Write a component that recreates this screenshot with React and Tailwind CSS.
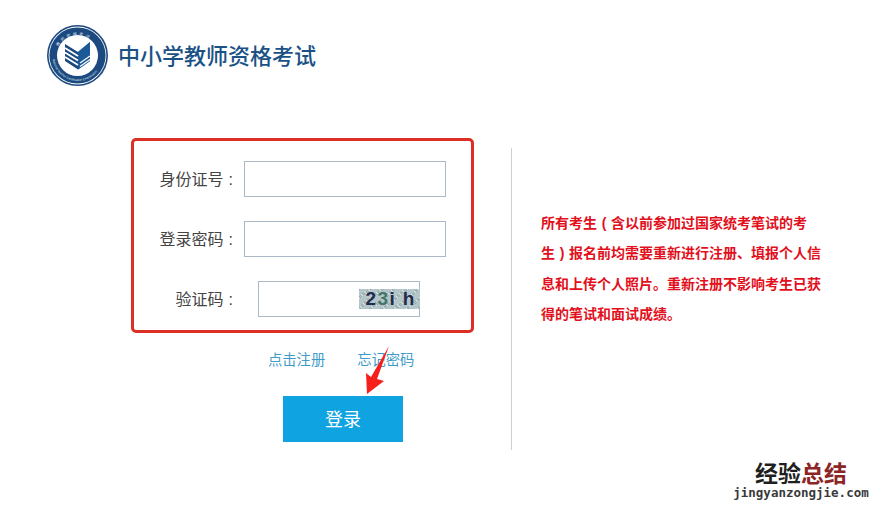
import React from 'react';

const cjk = { sans: 'font-["Liberation_Sans","Noto_Sans_CJK_SC",sans-serif]' };

// pseudo noise for the captcha background
const noise = Array.from({ length: 240 }, (_, i) => {
  const a = (i * 7919) % 61;
  const b = (i * 104729) % 20;
  const c = (i * 31) % 3;
  return { x: a, y: b, fill: ['#8ea6ad', '#dbe5e6', '#9db3a9'][c] };
});

const Logo = () => (
  <svg viewBox="0 0 61 61" className="w-[61px] h-[61px] shrink-0">
    <defs>
      <path id="ringTop" d="M8 33 A22.5 22.5 0 0 1 53 33" />
      <path id="ringBottom" d="M5.5 31 A25 25 0 0 0 55.5 31" />
    </defs>
    <circle cx="30.5" cy="30.5" r="30.5" fill="#1c4a80" />
    <circle cx="30.5" cy="30.5" r="28.9" fill="#ffffff" />
    <circle cx="30.5" cy="30.5" r="28.1" fill="#1c4a80" />
    <circle cx="30.5" cy="30.5" r="20.5" fill="#ffffff" />
    <text fontSize="4" fill="#dfe7f0" letterSpacing="2.2" fontFamily="Noto Sans CJK SC, sans-serif">
      <textPath href="#ringTop" startOffset="17%">教师资格考试</textPath>
    </text>
    <text fontSize="3.1" fill="#dfe7f0" fontFamily="Liberation Sans, sans-serif">
      <textPath href="#ringBottom" startOffset="4%">National Teacher Certification Examination</textPath>
    </text>
    <path d="M18 19 L31 27 L43 17 V36 L31 44.500 L18 36 Z" fill="#1c4a80" />
    <path d="M31 27 L43 17 V36 L31 44.500 Z" fill="#1b5a97" />
    <path d="M18 23 L31 31 M18 27.500 L31 35.500 M18 32 L31 40" stroke="#ffffff" strokeWidth="1.700" fill="none" />
    <path d="M33 38 L43 31 M33 41.500 L43 34.500" stroke="#ffffff" strokeWidth="1.200" fill="none" />
  </svg>
);

const Captcha = () => (
  <div className="relative w-[61px] h-5 -mr-px overflow-hidden bg-[#b4c6ca]">
    <svg className="absolute inset-0 w-[61px] h-5" viewBox="0 0 61 20">
      {noise.map((n, i) => (
        <rect key={i} x={n.x} y={n.y} width="1" height="1" fill={n.fill} />
      ))}
    </svg>
    <span className='absolute left-[6.500px] top-0 text-[19px] leading-5 font-bold tracking-[1.400px] text-[#232c4a] font-["Liberation_Sans",sans-serif] whitespace-pre'>
      2<span className="text-[#43756b]">3</span>i h
    </span>
  </div>
);

const Field = ({ label, children }) => (
  <div className="flex items-center">
    <label className="w-[99px] pt-[2px] text-right text-[16px] text-[#444444] leading-none">
      {label}
      <span className="ml-[5px]">:</span>
    </label>
    {children}
  </div>
);

const App = () => {
  return (
    <div className={`relative w-[883px] h-[510px] overflow-hidden bg-white ${cjk.sans}`}>
      {/* Header */}
      <div className="flex items-center gap-[10px] pt-[25px] pl-[47px]">
        <Logo />
        <h1 className="pt-[2px] text-[22px] leading-none text-[#1b5286] font-medium">中小学教师资格考试</h1>
      </div>

      <div className="flex items-start mt-[52px] pl-[131px]">
        {/* Login column */}
        <div className="w-[343px]">
          <div className="flex flex-col gap-6 h-[195px] pt-5 border-[3px] border-[#dc2f26] rounded-[5px]">
            <Field label="身份证号">
              <input className="ml-[11px] w-[202px] h-9 border border-[#a9b9c7] bg-white" />
            </Field>
            <Field label="登录密码">
              <input className="ml-[11px] w-[202px] h-9 border border-[#a9b9c7] bg-white" />
            </Field>
            <Field label="验证码">
              <div className="ml-[25px] w-[162px] h-9 flex justify-end items-start pt-[7px] border border-[#a9b9c7] bg-white">
                <Captcha />
              </div>
            </Field>
          </div>
          <div className="flex gap-[32px] mt-[18px] ml-[137px] text-[14.3px] leading-[18px] text-[#3f9cc8]">
            <a>点击注册</a>
            <a>忘记密码</a>
          </div>
          <button className="block w-[120px] h-[46px] mt-[27px] ml-[152px] pt-[2px] bg-[#0fa3e1] text-white text-[18px]">登录</button>
        </div>

        <div className="w-px h-[302px] mt-[10px] ml-[37px] bg-[#cfcfcf]" />

        <p className="w-[280px] mt-[70px] ml-[29px] text-[14px] leading-[30.4px] font-bold text-[#e2101c]">
          所有考<span>生</span><span className="inline-block w-[14px] text-center">(</span>含以前参加过国家统考笔试的考<span className="whitespace-nowrap">生<span className="inline-block w-[14px] text-center">)</span></span>报名前均需要重新进行注册、填报个人信息和上传个人照片。重新注册不影响考生已获得的笔试和面试成绩。
        </p>
      </div>

      {/* annotation arrow */}
      <svg className="absolute left-0 top-0 w-[883px] h-[510px] pointer-events-none" viewBox="0 0 883 510">
        <path d="M389 346 L377 379 L384 381 L367 394 L366 373 L371 377 Z" fill="#f5201c" />
      </svg>

      {/* watermark */}
      <div className="absolute left-[733px] top-[460px] w-[136px] flex flex-col items-center">
        <div className='text-[23px] leading-[25px] font-bold text-[#1f1f1f] font-["Noto_Sans_CJK_SC",sans-serif]'>
          经验<span className="text-[#8c2626]">总结</span>
        </div>
        <div className='mt-px text-[12.500px] leading-[14px] font-bold text-[#3a3a3a] font-["DejaVu_Sans_Mono",monospace]'>jingyanzongjie.com</div>
      </div>
    </div>
  );
};

export default App;
